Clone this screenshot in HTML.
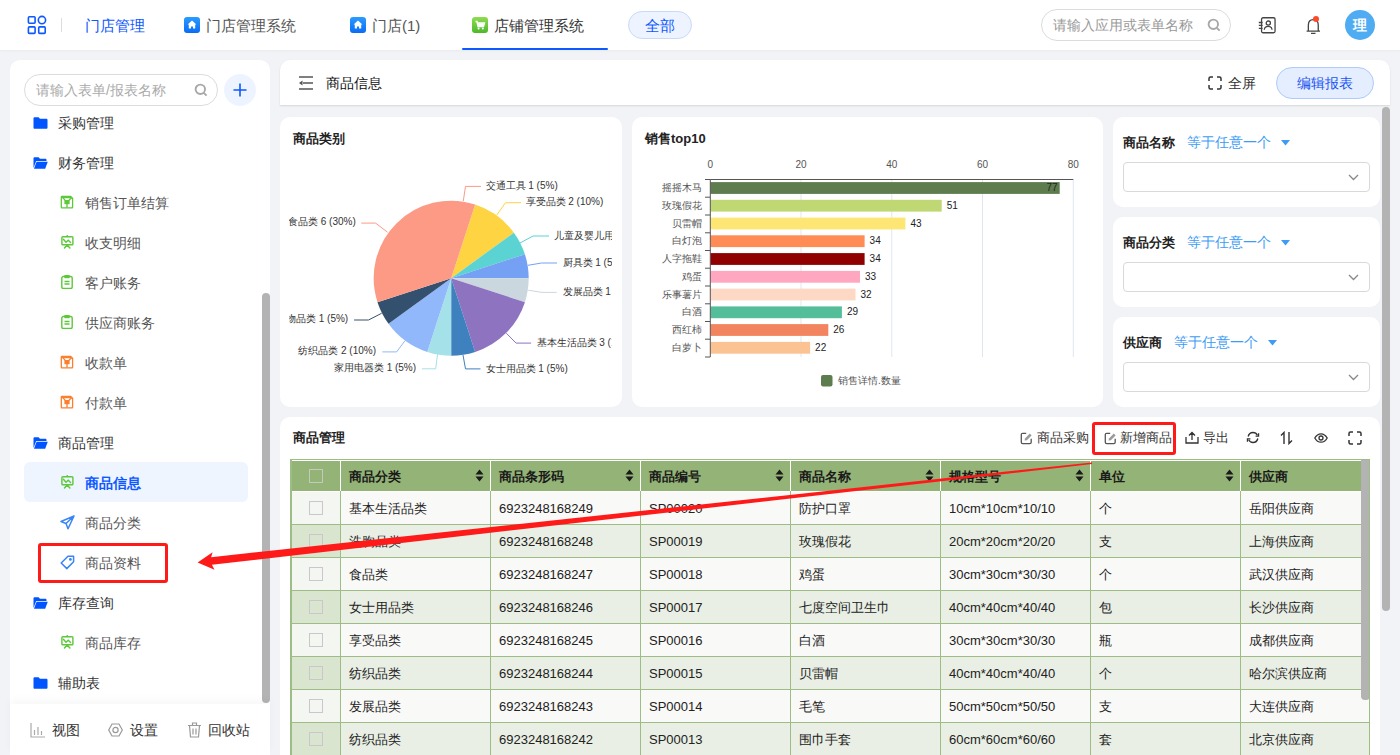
<!DOCTYPE html><html><head><meta charset="utf-8"><style>
*{box-sizing:border-box;margin:0;padding:0}
html,body{width:1400px;height:755px;overflow:hidden;background:#f2f3f7;font-family:"Liberation Sans", sans-serif;color:#333}
.abs{position:absolute}
.t{position:absolute;white-space:nowrap;line-height:1}
.card{position:absolute;background:#fff;border-radius:10px}
</style></head><body>

<div class="abs" style="left:0;top:0;width:1400px;height:50px;background:#fff;box-shadow:0 1px 3px rgba(0,0,0,0.04)"></div>
<svg class="abs" style="left:27px;top:15px" width="20" height="20" viewBox="0 0 20 20" fill="none" stroke="#0d58ff" stroke-width="1.6">
<rect x="1.4" y="1.8" width="6.7" height="6.5" rx="1"/><circle cx="14.95" cy="5.05" r="3.65"/><rect x="1.4" y="11.9" width="6.7" height="6.5" rx="1"/><rect x="11.7" y="11.9" width="6.5" height="6.5" rx="1"/></svg>
<div class="abs" style="left:61px;top:18px;width:1px;height:14px;background:#dcdcdc"></div>
<div class="t" style="left:85px;top:18px;font-size:15px;color:#0d58ff">门店管理</div>
<svg class="abs" style="left:184px;top:17px" width="16" height="16" viewBox="0 0 16 16"><defs><linearGradient id="hg184" x1="0" y1="0" x2="0" y2="1"><stop offset="0" stop-color="#2b9bff"/><stop offset="1" stop-color="#0a6cf5"/></linearGradient></defs><rect width="16" height="16" rx="3" fill="url(#hg184)"/><path d="M8 3.6 L12.4 7.6 L11.2 7.6 L11.2 11.6 L9 11.6 L9 9.6 L7 9.6 L7 11.6 L4.8 11.6 L4.8 7.6 L3.6 7.6 Z" fill="#fff"/></svg>
<div class="t" style="left:206px;top:18px;font-size:15px;color:#555">门店管理系统</div>
<svg class="abs" style="left:350px;top:17px" width="16" height="16" viewBox="0 0 16 16"><defs><linearGradient id="hg350" x1="0" y1="0" x2="0" y2="1"><stop offset="0" stop-color="#2b9bff"/><stop offset="1" stop-color="#0a6cf5"/></linearGradient></defs><rect width="16" height="16" rx="3" fill="url(#hg350)"/><path d="M8 3.6 L12.4 7.6 L11.2 7.6 L11.2 11.6 L9 11.6 L9 9.6 L7 9.6 L7 11.6 L4.8 11.6 L4.8 7.6 L3.6 7.6 Z" fill="#fff"/></svg>
<div class="t" style="left:372px;top:18px;font-size:15px;color:#555">门店(1)</div>
<svg class="abs" style="left:472px;top:17px" width="16" height="16" viewBox="0 0 16 16"><defs><linearGradient id="gg" x1="0" y1="0" x2="0" y2="1"><stop offset="0" stop-color="#8fdc52"/><stop offset="1" stop-color="#4cb82a"/></linearGradient></defs><rect width="16" height="16" rx="3" fill="url(#gg)"/><path d="M3.5 4.5 L5 4.5 L6 9.5 L11.5 9.5 L12.5 6 L5.5 6" fill="none" stroke="#fff" stroke-width="1.4"/><path d="M5.6 6.2 L12.2 6.2 L11.4 9.2 L6.2 9.2Z" fill="#fff"/><circle cx="6.6" cy="11.6" r="1" fill="#fff"/><circle cx="10.8" cy="11.6" r="1" fill="#fff"/></svg>
<div class="t" style="left:494px;top:18px;font-size:15px;color:#333">店铺管理系统</div>
<div class="abs" style="left:462px;top:48px;width:146px;height:2px;border-radius:1px;background:#0d58ff"></div>
<div class="abs" style="left:628px;top:11px;width:64px;height:28px;border:1px solid #c9daf8;background:#eef4ff;border-radius:14px"></div>
<div class="t" style="left:645px;top:18px;font-size:15px;color:#0d58ff">全部</div>
<div class="abs" style="left:1041px;top:9px;width:190px;height:32px;border:1px solid #dcdcdc;border-radius:16px;background:#fff"></div>
<div class="t" style="left:1053px;top:18px;font-size:14px;color:#999">请输入应用或表单名称</div>
<svg class="abs" style="left:1207px;top:18px" width="14" height="14" viewBox="0 0 14 14" fill="none" stroke="#a8a8a8" stroke-width="1.9"><circle cx="6.3" cy="6.3" r="4.7"/><path d="M9.8 9.8 L12.6 12.6"/></svg>
<svg class="abs" style="left:1258px;top:16px" width="19" height="19" viewBox="0 0 19 19" fill="none" stroke="#444" stroke-width="1.3"><rect x="3.55" y="1.75" width="13.5" height="15" rx="1.5"/><circle cx="10.3" cy="7.1" r="2.1"/><path d="M6.3 13.7 C6.5 11.5 8 10.4 10.2 10.4 C12.4 10.4 13.9 11.5 14.1 13.7"/><path d="M0.8 6.5 H4.6 M0.8 9.4 H4.6 M0.8 12.4 H4.6"/></svg>
<svg class="abs" style="left:1304px;top:15px" width="18" height="20" viewBox="0 0 18 20" fill="none" stroke="#444" stroke-width="1.3"><path d="M4.35 15.6 V10 C4.35 6.5 6.5 4.55 9.3 4.55 C12.1 4.55 14.25 6.5 14.25 10 V15.6 M2.6 16.1 H16 M7 18.4 H11.5"/><circle cx="12" cy="3.9" r="3" fill="#fd4a2c" stroke="none"/></svg>
<div class="abs" style="left:1345px;top:10px;width:30px;height:30px;border-radius:50%;background:#4fabf2"></div>
<div class="t" style="left:1353px;top:18px;font-size:14px;font-weight:bold;color:#fff">理</div>
<div class="abs" style="left:10px;top:60px;width:260px;height:700px;background:#fff;border-radius:10px 10px 0 0"></div>
<div class="abs" style="left:24px;top:74px;width:194px;height:32px;border:1px solid #dcdcdc;border-radius:16px"></div>
<div class="t" style="left:36px;top:83px;font-size:14px;color:#aaa">请输入表单/报表名称</div>
<svg class="abs" style="left:194px;top:83px" width="14" height="14" viewBox="0 0 14 14" fill="none" stroke="#a8a8a8" stroke-width="1.9"><circle cx="6.3" cy="6.3" r="4.7"/><path d="M9.8 9.8 L12.6 12.6"/></svg>
<div class="abs" style="left:224px;top:74px;width:32px;height:32px;border-radius:50%;background:#eef4ff"></div>
<svg class="abs" style="left:232px;top:82px" width="16" height="16" viewBox="0 0 16 16" stroke="#0d58ff" stroke-width="1.6"><path d="M8 1.5 V14.5 M1.5 8 H14.5"/></svg>
<svg class="abs" style="left:33px;top:117px" width="15" height="12" viewBox="0 0 15 12"><path d="M0.5 1.2 C0.5 0.7 0.9 0.3 1.4 0.3 H5.6 L7 1.8 H13.6 C14.1 1.8 14.5 2.2 14.5 2.7 V11 C14.5 11.5 14.1 11.8 13.6 11.8 H1.4 C0.9 11.8 0.5 11.5 0.5 11 Z" fill="#0055ff"/></svg>
<div class="t" style="left:58px;top:116px;font-size:14px;color:#333">采购管理</div>
<svg class="abs" style="left:33px;top:157px" width="15" height="12" viewBox="0 0 15 12"><path d="M0.5 1.2 C0.5 0.7 0.9 0.3 1.4 0.3 H5.6 L7 1.8 H12.6 C13.1 1.8 13.5 2.2 13.5 2.7 V4 H3.2 L0.5 11 Z" fill="#0055ff"/><path d="M3.6 4.8 H14.8 L12.2 11.8 H1 Z" fill="#0055ff"/></svg>
<div class="t" style="left:58px;top:156px;font-size:14px;color:#333">财务管理</div>
<svg class="abs" style="left:60px;top:195px" width="14" height="14" viewBox="0 0 14 14" fill="none" stroke="#5cc83a" stroke-width="1.3"><path d="M1.9 1.3 H10.6 L12.6 3.3 V12.2 Q12.6 12.8 12 12.8 H1.9 Q1.3 12.8 1.3 12.2 V1.9 Q1.3 1.3 1.9 1.3 Z"/><path d="M2 1.6 L5 5.2 M11.8 2.6 L9 5.2 M7 9 V12.8"/><rect x="4.4" y="5" width="5.2" height="4.2" fill="#5cc83a" stroke="none"/><path d="M1.3 1.3 H10.6 L12.6 3.3 H1.3Z" fill="#5cc83a" stroke="none"/></svg>
<div class="t" style="left:85px;top:196px;font-size:14px;color:#555;font-weight:normal">销售订单结算</div>
<svg class="abs" style="left:60px;top:235px" width="14" height="14" viewBox="0 0 14 14" fill="none" stroke="#5cc83a" stroke-width="1.4" stroke-linecap="round"><rect x="1.9" y="1.7" width="11" height="8" rx="0.8"/><path d="M3.4 4.3 L6 7.3 L8.2 5.2 L10.6 7.6 M7.2 10 L4.5 13 M7.2 10 L9.9 13 M7.2 0.6 V1.6"/></svg>
<div class="t" style="left:85px;top:236px;font-size:14px;color:#555;font-weight:normal">收支明细</div>
<svg class="abs" style="left:60px;top:275px" width="14" height="14" viewBox="0 0 14 14" fill="none" stroke="#5cc83a" stroke-width="1.4"><rect x="1.8" y="1.5" width="10.4" height="12" rx="1.5"/><rect x="4.8" y="0.6" width="4.4" height="2" rx="0.8" fill="#5cc83a"/><path d="M4.5 6.5 H9.5 M4.5 9 H9.5"/></svg>
<div class="t" style="left:85px;top:276px;font-size:14px;color:#555;font-weight:normal">客户账务</div>
<svg class="abs" style="left:60px;top:315px" width="14" height="14" viewBox="0 0 14 14" fill="none" stroke="#5cc83a" stroke-width="1.4"><rect x="1.8" y="1.5" width="10.4" height="12" rx="1.5"/><rect x="4.8" y="0.6" width="4.4" height="2" rx="0.8" fill="#5cc83a"/><path d="M4.5 6.5 H9.5 M4.5 9 H9.5"/></svg>
<div class="t" style="left:85px;top:316px;font-size:14px;color:#555;font-weight:normal">供应商账务</div>
<svg class="abs" style="left:60px;top:355px" width="14" height="14" viewBox="0 0 14 14" fill="none" stroke="#fb7f2c" stroke-width="1.3"><path d="M1.9 1.3 H10.6 L12.6 3.3 V12.2 Q12.6 12.8 12 12.8 H1.9 Q1.3 12.8 1.3 12.2 V1.9 Q1.3 1.3 1.9 1.3 Z"/><path d="M2 1.6 L5 5.2 M11.8 2.6 L9 5.2 M7 9 V12.8"/><rect x="4.4" y="5" width="5.2" height="4.2" fill="#fb7f2c" stroke="none"/><path d="M1.3 1.3 H10.6 L12.6 3.3 H1.3Z" fill="#fb7f2c" stroke="none"/></svg>
<div class="t" style="left:85px;top:356px;font-size:14px;color:#555;font-weight:normal">收款单</div>
<svg class="abs" style="left:60px;top:395px" width="14" height="14" viewBox="0 0 14 14" fill="none" stroke="#fb7f2c" stroke-width="1.3"><path d="M1.9 1.3 H10.6 L12.6 3.3 V12.2 Q12.6 12.8 12 12.8 H1.9 Q1.3 12.8 1.3 12.2 V1.9 Q1.3 1.3 1.9 1.3 Z"/><path d="M2 1.6 L5 5.2 M11.8 2.6 L9 5.2 M7 9 V12.8"/><rect x="4.4" y="5" width="5.2" height="4.2" fill="#fb7f2c" stroke="none"/><path d="M1.3 1.3 H10.6 L12.6 3.3 H1.3Z" fill="#fb7f2c" stroke="none"/></svg>
<div class="t" style="left:85px;top:396px;font-size:14px;color:#555;font-weight:normal">付款单</div>
<svg class="abs" style="left:33px;top:437px" width="15" height="12" viewBox="0 0 15 12"><path d="M0.5 1.2 C0.5 0.7 0.9 0.3 1.4 0.3 H5.6 L7 1.8 H12.6 C13.1 1.8 13.5 2.2 13.5 2.7 V4 H3.2 L0.5 11 Z" fill="#0055ff"/><path d="M3.6 4.8 H14.8 L12.2 11.8 H1 Z" fill="#0055ff"/></svg>
<div class="t" style="left:58px;top:436px;font-size:14px;color:#333">商品管理</div>
<div class="abs" style="left:24px;top:462px;width:224px;height:40px;background:#eef5ff;border-radius:6px"></div>
<svg class="abs" style="left:60px;top:475px" width="14" height="14" viewBox="0 0 14 14" fill="none" stroke="#5cc83a" stroke-width="1.4" stroke-linecap="round"><rect x="1.9" y="1.7" width="11" height="8" rx="0.8"/><path d="M3.4 4.3 L6 7.3 L8.2 5.2 L10.6 7.6 M7.2 10 L4.5 13 M7.2 10 L9.9 13 M7.2 0.6 V1.6"/></svg>
<div class="t" style="left:85px;top:476px;font-size:14px;color:#0d58ff;font-weight:bold">商品信息</div>
<svg class="abs" style="left:60px;top:515px" width="15" height="15" viewBox="0 0 15 15" fill="none" stroke="#3a84f5" stroke-width="1.5" stroke-linejoin="round"><path d="M14 1 L1 6.5 L6 8.5 L8 13.8 Z M14 1 L6 8.5"/></svg>
<div class="t" style="left:85px;top:516px;font-size:14px;color:#555;font-weight:normal">商品分类</div>
<svg class="abs" style="left:60px;top:555px" width="15" height="15" viewBox="0 0 15 15" fill="none" stroke="#3a84f5" stroke-width="1.5" stroke-linejoin="round"><path d="M8 1.2 H13.6 V6.8 L6.8 13.6 L1.2 8 Z"/><circle cx="10.4" cy="4.4" r="1.4" fill="#3a84f5" stroke="none"/></svg>
<div class="t" style="left:85px;top:556px;font-size:14px;color:#555;font-weight:normal">商品资料</div>
<svg class="abs" style="left:33px;top:597px" width="15" height="12" viewBox="0 0 15 12"><path d="M0.5 1.2 C0.5 0.7 0.9 0.3 1.4 0.3 H5.6 L7 1.8 H12.6 C13.1 1.8 13.5 2.2 13.5 2.7 V4 H3.2 L0.5 11 Z" fill="#0055ff"/><path d="M3.6 4.8 H14.8 L12.2 11.8 H1 Z" fill="#0055ff"/></svg>
<div class="t" style="left:58px;top:596px;font-size:14px;color:#333">库存查询</div>
<svg class="abs" style="left:60px;top:635px" width="14" height="14" viewBox="0 0 14 14" fill="none" stroke="#5cc83a" stroke-width="1.4" stroke-linecap="round"><rect x="1.9" y="1.7" width="11" height="8" rx="0.8"/><path d="M3.4 4.3 L6 7.3 L8.2 5.2 L10.6 7.6 M7.2 10 L4.5 13 M7.2 10 L9.9 13 M7.2 0.6 V1.6"/></svg>
<div class="t" style="left:85px;top:636px;font-size:14px;color:#555;font-weight:normal">商品库存</div>
<svg class="abs" style="left:33px;top:677px" width="15" height="12" viewBox="0 0 15 12"><path d="M0.5 1.2 C0.5 0.7 0.9 0.3 1.4 0.3 H5.6 L7 1.8 H13.6 C14.1 1.8 14.5 2.2 14.5 2.7 V11 C14.5 11.5 14.1 11.8 13.6 11.8 H1.4 C0.9 11.8 0.5 11.5 0.5 11 Z" fill="#0055ff"/></svg>
<div class="t" style="left:58px;top:676px;font-size:14px;color:#333">辅助表</div>
<div class="abs" style="left:262px;top:293px;width:8px;height:410px;background:#b3b3b3;border-radius:4px"></div>
<div class="abs" style="left:10px;top:704px;width:260px;height:51px;background:#fff;box-shadow:0 -4px 8px rgba(0,0,0,0.03)"></div>
<svg class="abs" style="left:30px;top:723px" width="16" height="15" viewBox="0 0 16 15" fill="none" stroke="#aaa" stroke-width="1.2"><path d="M1 0 V14 H15 M4.5 7 V12 M8 4 V12 M11.5 8 V12"/></svg>
<div class="t" style="left:52px;top:723px;font-size:14px;color:#333">视图</div>
<svg class="abs" style="left:108px;top:723px" width="15" height="14" viewBox="0 0 15 14" fill="none" stroke="#999" stroke-width="1.2"><path d="M4 1 H11 L14.3 7 L11 13 H4 L0.7 7 Z"/><circle cx="7.5" cy="7" r="2.6"/></svg>
<div class="t" style="left:130px;top:723px;font-size:14px;color:#333">设置</div>
<svg class="abs" style="left:187px;top:722px" width="15" height="16" viewBox="0 0 15 16" fill="none" stroke="#999" stroke-width="1.2"><path d="M1 3.5 H14 M5.5 3.5 V1 H9.5 V3.5 M2.5 3.5 L3.5 15 H11.5 L12.5 3.5 M6 6.5 V12.5 M9 6.5 V12.5"/></svg>
<div class="t" style="left:208px;top:723px;font-size:14px;color:#333">回收站</div>
<div class="abs" style="left:280px;top:60px;width:1110px;height:45px;background:#fff;border-radius:10px 10px 0 0;box-shadow:0 1px 2px rgba(0,0,0,0.12)"></div>
<svg class="abs" style="left:299px;top:76px" width="14" height="14" viewBox="0 0 14 14" fill="none" stroke="#555" stroke-width="1.6"><path d="M0 1 H14 M4 7 H14 M0 13 H14"/><path d="M0 7 L3.5 4.5 V9.5 Z" fill="#555" stroke="none"/></svg>
<div class="t" style="left:326px;top:76px;font-size:14px;color:#111">商品信息</div>
<svg class="abs" style="left:1208px;top:76px" width="14" height="14" viewBox="0 0 14 14" fill="none" stroke="#333" stroke-width="1.5"><path d="M1 5 V2.5 Q1 1 2.5 1 H5 M9 1 H11.5 Q13 1 13 2.5 V5 M13 9 V11.5 Q13 13 11.5 13 H9 M5 13 H2.5 Q1 13 1 11.5 V9"/></svg>
<div class="t" style="left:1228px;top:76px;font-size:14px;color:#333">全屏</div>
<div class="abs" style="left:1276px;top:67px;width:98px;height:32px;border:1px solid #aecbfa;background:#e4eeff;border-radius:16px"></div>
<div class="t" style="left:1297px;top:76px;font-size:14px;color:#1a53f0">编辑报表</div>
<div class="abs" style="left:1382px;top:107px;width:8px;height:504px;background:#b3b3b3;border-radius:4px"></div>
<div class="card" style="left:280px;top:117px;width:342px;height:290px"></div>
<div class="t" style="left:293px;top:132px;font-size:13px;font-weight:bold;color:#222">商品类别</div>
<svg class="abs" style="left:289px;top:117px" width="323" height="290" viewBox="289 117 323 290" font-family='"Liberation Sans", sans-serif' font-size="10"><path d="M451.2,278.2 L475.15,204.49 A77.5,77.5 0 0 1 513.90,232.65 Z" fill="#fed443"/><path d="M451.2,278.2 L513.90,232.65 A77.5,77.5 0 0 1 524.91,254.25 Z" fill="#5bd3d3"/><path d="M451.2,278.2 L524.91,254.25 A77.5,77.5 0 0 1 528.70,278.20 Z" fill="#75a1f4"/><path d="M451.2,278.2 L528.70,278.20 A77.5,77.5 0 0 1 524.91,302.15 Z" fill="#cbd7df"/><path d="M451.2,278.2 L524.91,302.15 A77.5,77.5 0 0 1 475.15,351.91 Z" fill="#8d73c0"/><path d="M451.2,278.2 L475.15,351.91 A77.5,77.5 0 0 1 451.20,355.70 Z" fill="#3f80bf"/><path d="M451.2,278.2 L451.20,355.70 A77.5,77.5 0 0 1 427.25,351.91 Z" fill="#a5e1e8"/><path d="M451.2,278.2 L427.25,351.91 A77.5,77.5 0 0 1 388.50,323.75 Z" fill="#90b8fb"/><path d="M451.2,278.2 L388.50,323.75 A77.5,77.5 0 0 1 377.49,302.15 Z" fill="#34506f"/><path d="M451.2,278.2 L377.49,302.15 A77.5,77.5 0 0 1 475.15,204.49 Z" fill="#fd9a86"/><path d="M463.3,201 L465.5,186.4 L481,186.4" fill="none" stroke="#fd9a86" stroke-width="1"/><text x="485.5" y="188.8" text-anchor="start" fill="#333">交通工具 1 (5%)</text><path d="M496.8,215 L505.5,202.7 L521,202.7" fill="none" stroke="#fed443" stroke-width="1"/><text x="525.5" y="205.3" text-anchor="start" fill="#333">享受品类 2 (10%)</text><path d="M519.6,243.2 L533,236 L549,236" fill="none" stroke="#5bd3d3" stroke-width="1"/><text x="553.5" y="238.8" text-anchor="start" fill="#333">儿童及婴儿用品 1 (5%)</text><path d="M528,265.3 L541.6,263 L557,263" fill="none" stroke="#75a1f4" stroke-width="1"/><text x="562.5" y="265.8" text-anchor="start" fill="#333">厨具类 1 (5%)</text><path d="M528.2,290.2 L542,292.4 L556.6,292.4" fill="none" stroke="#cbd7df" stroke-width="1"/><text x="562.5" y="294.8" text-anchor="start" fill="#333">发展品类 1 (5%)</text><path d="M506.3,333.2 L516.1,343.1 L531.1,343.1" fill="none" stroke="#8d73c0" stroke-width="1"/><text x="536.5" y="345.8" text-anchor="start" fill="#333">基本生活品类 3 (15%)</text><path d="M463,355 L465.5,368.9 L480.5,368.9" fill="none" stroke="#3f80bf" stroke-width="1"/><text x="485.5" y="371.8" text-anchor="start" fill="#333">女士用品类 1 (5%)</text><path d="M437.6,353.8 L435.7,368.8 L422,368.8" fill="none" stroke="#a5e1e8" stroke-width="1"/><text x="416.1" y="371.3" text-anchor="end" fill="#333">家用电器类 1 (5%)</text><path d="M405,340.7 L396.6,351.9 L382.3,351.9" fill="none" stroke="#90b8fb" stroke-width="1"/><text x="376" y="354.1" text-anchor="end" fill="#333">纺织品类 2 (10%)</text><path d="M381.6,313.3 L368.5,320 L354.1,320" fill="none" stroke="#34506f" stroke-width="1"/><text x="348.2" y="322.1" text-anchor="end" fill="#333">宠物品类 1 (5%)</text><path d="M387.5,232.2 L375.6,223.1 L361.3,223.1" fill="none" stroke="#fd9a86" stroke-width="1"/><text x="355.8" y="225.4" text-anchor="end" fill="#333">食品类 6 (30%)</text></svg>
<div class="card" style="left:632px;top:117px;width:471px;height:290px"></div>
<div class="t" style="left:645px;top:132px;font-size:13px;font-weight:bold;color:#222">销售top10</div>
<svg class="abs" style="left:632px;top:117px" width="471" height="290" viewBox="632 117 471 290" font-family='"Liberation Sans", sans-serif' font-size="10"><line x1="801.0" y1="179.5" x2="801.0" y2="357" stroke="#e0e6f1" stroke-width="1"/><line x1="891.8" y1="179.5" x2="891.8" y2="357" stroke="#e0e6f1" stroke-width="1"/><line x1="982.5" y1="179.5" x2="982.5" y2="357" stroke="#e0e6f1" stroke-width="1"/><line x1="1073.3" y1="179.5" x2="1073.3" y2="357" stroke="#e0e6f1" stroke-width="1"/><text x="710.3" y="168" text-anchor="middle" fill="#555">0</text><text x="801.0" y="168" text-anchor="middle" fill="#555">20</text><text x="891.8" y="168" text-anchor="middle" fill="#555">40</text><text x="982.5" y="168" text-anchor="middle" fill="#555">60</text><text x="1073.3" y="168" text-anchor="middle" fill="#555">80</text><rect x="710.3" y="182.1" width="349.4" height="11.8" fill="#5e7d4f"/><text x="1057.7" y="191.2" text-anchor="end" fill="#222">77</text><text x="701.5" y="191.2" text-anchor="end" fill="#555">摇摇木马</text><rect x="710.3" y="199.8" width="231.4" height="11.8" fill="#c0d874"/><text x="946.7" y="208.9" fill="#222">51</text><text x="701.5" y="208.9" text-anchor="end" fill="#555">玫瑰假花</text><rect x="710.3" y="217.6" width="195.1" height="11.8" fill="#fde674"/><text x="910.4" y="226.7" fill="#222">43</text><text x="701.5" y="226.7" text-anchor="end" fill="#555">贝雷帽</text><rect x="710.3" y="235.3" width="154.3" height="11.8" fill="#ff8b55"/><text x="869.6" y="244.4" fill="#222">34</text><text x="701.5" y="244.4" text-anchor="end" fill="#555">白灯泡</text><rect x="710.3" y="253.1" width="154.3" height="11.8" fill="#900000"/><text x="869.6" y="262.2" fill="#222">34</text><text x="701.5" y="262.2" text-anchor="end" fill="#555">人字拖鞋</text><rect x="710.3" y="270.9" width="149.7" height="11.8" fill="#ffa7c1"/><text x="865.0" y="279.9" fill="#222">33</text><text x="701.5" y="279.9" text-anchor="end" fill="#555">鸡蛋</text><rect x="710.3" y="288.6" width="145.2" height="11.8" fill="#fdd8c5"/><text x="860.5" y="297.7" fill="#222">32</text><text x="701.5" y="297.7" text-anchor="end" fill="#555">乐事薯片</text><rect x="710.3" y="306.4" width="131.6" height="11.8" fill="#54be9b"/><text x="846.9" y="315.4" fill="#222">29</text><text x="701.5" y="315.4" text-anchor="end" fill="#555">白酒</text><rect x="710.3" y="324.1" width="118.0" height="11.8" fill="#f2855f"/><text x="833.3" y="333.2" fill="#222">26</text><text x="701.5" y="333.2" text-anchor="end" fill="#555">西红柿</text><rect x="710.3" y="341.9" width="99.8" height="11.8" fill="#fbc392"/><text x="815.1" y="350.9" fill="#222">22</text><text x="701.5" y="350.9" text-anchor="end" fill="#555">白萝卜</text><line x1="705" y1="179.5" x2="710.3" y2="179.5" stroke="#555" stroke-width="1"/><line x1="705" y1="197.2" x2="710.3" y2="197.2" stroke="#555" stroke-width="1"/><line x1="705" y1="215.0" x2="710.3" y2="215.0" stroke="#555" stroke-width="1"/><line x1="705" y1="232.8" x2="710.3" y2="232.8" stroke="#555" stroke-width="1"/><line x1="705" y1="250.5" x2="710.3" y2="250.5" stroke="#555" stroke-width="1"/><line x1="705" y1="268.2" x2="710.3" y2="268.2" stroke="#555" stroke-width="1"/><line x1="705" y1="286.0" x2="710.3" y2="286.0" stroke="#555" stroke-width="1"/><line x1="705" y1="303.8" x2="710.3" y2="303.8" stroke="#555" stroke-width="1"/><line x1="705" y1="321.5" x2="710.3" y2="321.5" stroke="#555" stroke-width="1"/><line x1="705" y1="339.2" x2="710.3" y2="339.2" stroke="#555" stroke-width="1"/><line x1="705" y1="357.0" x2="710.3" y2="357.0" stroke="#555" stroke-width="1"/><line x1="710.3" y1="179.5" x2="1073.3" y2="179.5" stroke="#555" stroke-width="1"/><line x1="710.3" y1="179.5" x2="710.3" y2="357" stroke="#555" stroke-width="1"/><rect x="821" y="375" width="11.5" height="11.5" rx="2" fill="#5e7d4f"/><text x="838" y="384" fill="#555">销售详情.数量</text></svg>
<div class="card" style="left:1113px;top:117px;width:267px;height:90px"></div>
<div class="t" style="left:1123px;top:136px;font-size:13px;font-weight:bold;color:#222">商品名称</div>
<div class="t" style="left:1187px;top:135px;font-size:14px;color:#3e9cf5">等于任意一个</div>
<svg class="abs" style="left:1281px;top:140px" width="9" height="6" viewBox="0 0 9 6"><path d="M0 0 H9 L4.5 5.5Z" fill="#3e9cf5"/></svg>
<div class="abs" style="left:1123px;top:162px;width:247px;height:30px;border:1px solid #d9d9d9;border-radius:4px;background:#fff"></div>
<svg class="abs" style="left:1348px;top:174px" width="11" height="7" viewBox="0 0 11 7" fill="none" stroke="#888" stroke-width="1.3"><path d="M1 1 L5.5 5.5 L10 1"/></svg>
<div class="card" style="left:1113px;top:217px;width:267px;height:90px"></div>
<div class="t" style="left:1123px;top:236px;font-size:13px;font-weight:bold;color:#222">商品分类</div>
<div class="t" style="left:1187px;top:235px;font-size:14px;color:#3e9cf5">等于任意一个</div>
<svg class="abs" style="left:1281px;top:240px" width="9" height="6" viewBox="0 0 9 6"><path d="M0 0 H9 L4.5 5.5Z" fill="#3e9cf5"/></svg>
<div class="abs" style="left:1123px;top:262px;width:247px;height:30px;border:1px solid #d9d9d9;border-radius:4px;background:#fff"></div>
<svg class="abs" style="left:1348px;top:274px" width="11" height="7" viewBox="0 0 11 7" fill="none" stroke="#888" stroke-width="1.3"><path d="M1 1 L5.5 5.5 L10 1"/></svg>
<div class="card" style="left:1113px;top:317px;width:267px;height:90px"></div>
<div class="t" style="left:1123px;top:336px;font-size:13px;font-weight:bold;color:#222">供应商</div>
<div class="t" style="left:1174px;top:335px;font-size:14px;color:#3e9cf5">等于任意一个</div>
<svg class="abs" style="left:1268px;top:340px" width="9" height="6" viewBox="0 0 9 6"><path d="M0 0 H9 L4.5 5.5Z" fill="#3e9cf5"/></svg>
<div class="abs" style="left:1123px;top:362px;width:247px;height:30px;border:1px solid #d9d9d9;border-radius:4px;background:#fff"></div>
<svg class="abs" style="left:1348px;top:374px" width="11" height="7" viewBox="0 0 11 7" fill="none" stroke="#888" stroke-width="1.3"><path d="M1 1 L5.5 5.5 L10 1"/></svg>
<div class="card" style="left:280px;top:417px;width:1100px;height:360px"></div>
<div class="t" style="left:293px;top:431px;font-size:13px;font-weight:bold;color:#222">商品管理</div>
<svg class="abs" style="left:1020px;top:432px" width="13" height="13" viewBox="0 0 13 13" fill="none"><path d="M6.2 1.3 H2.7 Q1.3 1.3 1.3 2.7 V10.3 Q1.3 11.7 2.7 11.7 H9.8 Q11.2 11.7 11.2 10.3 V6.8" stroke="#555" stroke-width="1.3"/><path d="M4.6 8.6 L5 6.4 L9.8 1.6 L11.6 3.4 L6.8 8.2 Z" fill="#9a9a9a"/></svg>
<div class="t" style="left:1037px;top:431px;font-size:13px;color:#333">商品采购</div>
<svg class="abs" style="left:1104px;top:432px" width="13" height="13" viewBox="0 0 13 13" fill="none"><path d="M6.2 1.3 H2.7 Q1.3 1.3 1.3 2.7 V10.3 Q1.3 11.7 2.7 11.7 H9.8 Q11.2 11.7 11.2 10.3 V6.8" stroke="#555" stroke-width="1.3"/><path d="M4.6 8.6 L5 6.4 L9.8 1.6 L11.6 3.4 L6.8 8.2 Z" fill="#9a9a9a"/></svg>
<div class="t" style="left:1120px;top:431px;font-size:13px;color:#333">新增商品</div>
<svg class="abs" style="left:1185px;top:431px" width="14" height="13" viewBox="0 0 14 13" fill="none" stroke="#333" stroke-width="1.3"><path d="M1 6 V12 H13 V6 M7 9 V1.5 M4 4.5 L7 1.5 L10 4.5"/></svg>
<div class="t" style="left:1203px;top:431px;font-size:13px;color:#333">导出</div>
<svg class="abs" style="left:1246px;top:431px" width="14" height="13" viewBox="0 0 14 13" fill="none" stroke="#333" stroke-width="1.4"><path d="M2.2 5.5 C2.8 3 4.8 1.5 7 1.5 C9 1.5 10.6 2.6 11.4 4.2 M11.8 7.5 C11.2 10 9.2 11.5 7 11.5 C5 11.5 3.4 10.4 2.6 8.8"/><path d="M12.6 2.2 V5.2 H9.6 M1.4 10.8 V7.8 H4.4" stroke-width="1.2"/></svg>
<svg class="abs" style="left:1280px;top:431px" width="13" height="14" viewBox="0 0 13 14" fill="none" stroke="#333" stroke-width="1.4"><path d="M4 13 V1.5 L1 4.5 M9 1 V12.5 L12 9.5"/></svg>
<svg class="abs" style="left:1314px;top:433px" width="14" height="10" viewBox="0 0 14 10" fill="none" stroke="#333" stroke-width="1.3"><path d="M0.8 5 C2.5 2 4.6 0.8 7 0.8 C9.4 0.8 11.5 2 13.2 5 C11.5 8 9.4 9.2 7 9.2 C4.6 9.2 2.5 8 0.8 5Z"/><circle cx="7" cy="5" r="2"/></svg>
<svg class="abs" style="left:1348px;top:431px" width="14" height="14" viewBox="0 0 14 14" fill="none" stroke="#333" stroke-width="1.5"><path d="M1 5 V2.5 Q1 1 2.5 1 H5 M9 1 H11.5 Q13 1 13 2.5 V5 M13 9 V11.5 Q13 13 11.5 13 H9 M5 13 H2.5 Q1 13 1 11.5 V9"/></svg>
<div class="abs" style="left:290px;top:459px;width:1080px;height:300px;border:1px solid #9dbd85;border-left-width:2px;background:#fff;overflow:hidden">
<div class="abs" style="left:0;top:1px;width:1080px;height:30px;background:#94b377"></div>
<div class="abs" style="left:48px;top:1px;width:1px;height:30px;background:#fff"></div>
<div class="abs" style="left:198px;top:1px;width:1px;height:30px;background:#fff"></div>
<div class="abs" style="left:348px;top:1px;width:1px;height:30px;background:#fff"></div>
<div class="abs" style="left:498px;top:1px;width:1px;height:30px;background:#fff"></div>
<div class="abs" style="left:648px;top:1px;width:1px;height:30px;background:#fff"></div>
<div class="abs" style="left:798px;top:1px;width:1px;height:30px;background:#fff"></div>
<div class="abs" style="left:948px;top:1px;width:1px;height:30px;background:#fff"></div>
<div class="abs" style="left:17px;top:9px;width:14px;height:14px;border:1px solid #c4c9bf;background:#94b377"></div>
<div class="t" style="left:57px;top:10px;font-size:13px;font-weight:bold;color:#1a1a1a">商品分类</div>
<svg class="abs" style="left:183px;top:9px" width="9" height="13" viewBox="0 0 9 13"><path d="M0.5 5.5 L4.5 0.5 L8.5 5.5Z M0.5 7.5 H8.5 L4.5 12.5Z" fill="#1a1a1a"/></svg>
<div class="t" style="left:207px;top:10px;font-size:13px;font-weight:bold;color:#1a1a1a">商品条形码</div>
<svg class="abs" style="left:333px;top:9px" width="9" height="13" viewBox="0 0 9 13"><path d="M0.5 5.5 L4.5 0.5 L8.5 5.5Z M0.5 7.5 H8.5 L4.5 12.5Z" fill="#1a1a1a"/></svg>
<div class="t" style="left:357px;top:10px;font-size:13px;font-weight:bold;color:#1a1a1a">商品编号</div>
<svg class="abs" style="left:483px;top:9px" width="9" height="13" viewBox="0 0 9 13"><path d="M0.5 5.5 L4.5 0.5 L8.5 5.5Z M0.5 7.5 H8.5 L4.5 12.5Z" fill="#1a1a1a"/></svg>
<div class="t" style="left:507px;top:10px;font-size:13px;font-weight:bold;color:#1a1a1a">商品名称</div>
<svg class="abs" style="left:633px;top:9px" width="9" height="13" viewBox="0 0 9 13"><path d="M0.5 5.5 L4.5 0.5 L8.5 5.5Z M0.5 7.5 H8.5 L4.5 12.5Z" fill="#1a1a1a"/></svg>
<div class="t" style="left:657px;top:10px;font-size:13px;font-weight:bold;color:#1a1a1a">规格型号</div>
<svg class="abs" style="left:783px;top:9px" width="9" height="13" viewBox="0 0 9 13"><path d="M0.5 5.5 L4.5 0.5 L8.5 5.5Z M0.5 7.5 H8.5 L4.5 12.5Z" fill="#1a1a1a"/></svg>
<div class="t" style="left:807px;top:10px;font-size:13px;font-weight:bold;color:#1a1a1a">单位</div>
<svg class="abs" style="left:933px;top:9px" width="9" height="13" viewBox="0 0 9 13"><path d="M0.5 5.5 L4.5 0.5 L8.5 5.5Z M0.5 7.5 H8.5 L4.5 12.5Z" fill="#1a1a1a"/></svg>
<div class="t" style="left:957px;top:10px;font-size:13px;font-weight:bold;color:#1a1a1a">供应商</div>
<div class="abs" style="left:0;top:32px;width:1080px;height:33px;background:#f9f9f7;border-bottom:1px solid #9dbd85"></div>
<div class="abs" style="left:0;top:32px;width:48px;height:33px;background:#f4f6f1;border-bottom:1px solid #9dbd85"></div>
<div class="abs" style="left:17px;top:41px;width:14px;height:14px;border:1px solid #cbc6cd"></div>
<div class="t" style="left:57px;top:42px;font-size:13px;color:#222">基本生活品类</div>
<div class="t" style="left:207px;top:42px;font-size:13px;color:#222">6923248168249</div>
<div class="t" style="left:357px;top:42px;font-size:13px;color:#222">SP00020</div>
<div class="t" style="left:507px;top:42px;font-size:13px;color:#222">防护口罩</div>
<div class="t" style="left:657px;top:42px;font-size:13px;color:#222">10cm*10cm*10/10</div>
<div class="t" style="left:807px;top:42px;font-size:13px;color:#222">个</div>
<div class="t" style="left:957px;top:42px;font-size:13px;color:#222">岳阳供应商</div>
<div class="abs" style="left:0;top:65px;width:1080px;height:33px;background:#e9efe4;border-bottom:1px solid #9dbd85"></div>
<div class="abs" style="left:0;top:65px;width:48px;height:33px;background:#dae5d0;border-bottom:1px solid #9dbd85"></div>
<div class="abs" style="left:17px;top:74px;width:14px;height:14px;border:1px solid #cbc6cd"></div>
<div class="t" style="left:57px;top:75px;font-size:13px;color:#222">洗胸品类</div>
<div class="t" style="left:207px;top:75px;font-size:13px;color:#222">6923248168248</div>
<div class="t" style="left:357px;top:75px;font-size:13px;color:#222">SP00019</div>
<div class="t" style="left:507px;top:75px;font-size:13px;color:#222">玫瑰假花</div>
<div class="t" style="left:657px;top:75px;font-size:13px;color:#222">20cm*20cm*20/20</div>
<div class="t" style="left:807px;top:75px;font-size:13px;color:#222">支</div>
<div class="t" style="left:957px;top:75px;font-size:13px;color:#222">上海供应商</div>
<div class="abs" style="left:0;top:98px;width:1080px;height:33px;background:#f9f9f7;border-bottom:1px solid #9dbd85"></div>
<div class="abs" style="left:0;top:98px;width:48px;height:33px;background:#f4f6f1;border-bottom:1px solid #9dbd85"></div>
<div class="abs" style="left:17px;top:107px;width:14px;height:14px;border:1px solid #cbc6cd"></div>
<div class="t" style="left:57px;top:108px;font-size:13px;color:#222">食品类</div>
<div class="t" style="left:207px;top:108px;font-size:13px;color:#222">6923248168247</div>
<div class="t" style="left:357px;top:108px;font-size:13px;color:#222">SP00018</div>
<div class="t" style="left:507px;top:108px;font-size:13px;color:#222">鸡蛋</div>
<div class="t" style="left:657px;top:108px;font-size:13px;color:#222">30cm*30cm*30/30</div>
<div class="t" style="left:807px;top:108px;font-size:13px;color:#222">个</div>
<div class="t" style="left:957px;top:108px;font-size:13px;color:#222">武汉供应商</div>
<div class="abs" style="left:0;top:131px;width:1080px;height:33px;background:#e9efe4;border-bottom:1px solid #9dbd85"></div>
<div class="abs" style="left:0;top:131px;width:48px;height:33px;background:#dae5d0;border-bottom:1px solid #9dbd85"></div>
<div class="abs" style="left:17px;top:140px;width:14px;height:14px;border:1px solid #cbc6cd"></div>
<div class="t" style="left:57px;top:141px;font-size:13px;color:#222">女士用品类</div>
<div class="t" style="left:207px;top:141px;font-size:13px;color:#222">6923248168246</div>
<div class="t" style="left:357px;top:141px;font-size:13px;color:#222">SP00017</div>
<div class="t" style="left:507px;top:141px;font-size:13px;color:#222">七度空间卫生巾</div>
<div class="t" style="left:657px;top:141px;font-size:13px;color:#222">40cm*40cm*40/40</div>
<div class="t" style="left:807px;top:141px;font-size:13px;color:#222">包</div>
<div class="t" style="left:957px;top:141px;font-size:13px;color:#222">长沙供应商</div>
<div class="abs" style="left:0;top:164px;width:1080px;height:33px;background:#f9f9f7;border-bottom:1px solid #9dbd85"></div>
<div class="abs" style="left:0;top:164px;width:48px;height:33px;background:#f4f6f1;border-bottom:1px solid #9dbd85"></div>
<div class="abs" style="left:17px;top:173px;width:14px;height:14px;border:1px solid #cbc6cd"></div>
<div class="t" style="left:57px;top:174px;font-size:13px;color:#222">享受品类</div>
<div class="t" style="left:207px;top:174px;font-size:13px;color:#222">6923248168245</div>
<div class="t" style="left:357px;top:174px;font-size:13px;color:#222">SP00016</div>
<div class="t" style="left:507px;top:174px;font-size:13px;color:#222">白酒</div>
<div class="t" style="left:657px;top:174px;font-size:13px;color:#222">30cm*30cm*30/30</div>
<div class="t" style="left:807px;top:174px;font-size:13px;color:#222">瓶</div>
<div class="t" style="left:957px;top:174px;font-size:13px;color:#222">成都供应商</div>
<div class="abs" style="left:0;top:197px;width:1080px;height:33px;background:#e9efe4;border-bottom:1px solid #9dbd85"></div>
<div class="abs" style="left:0;top:197px;width:48px;height:33px;background:#dae5d0;border-bottom:1px solid #9dbd85"></div>
<div class="abs" style="left:17px;top:206px;width:14px;height:14px;border:1px solid #cbc6cd"></div>
<div class="t" style="left:57px;top:207px;font-size:13px;color:#222">纺织品类</div>
<div class="t" style="left:207px;top:207px;font-size:13px;color:#222">6923248168244</div>
<div class="t" style="left:357px;top:207px;font-size:13px;color:#222">SP00015</div>
<div class="t" style="left:507px;top:207px;font-size:13px;color:#222">贝雷帽</div>
<div class="t" style="left:657px;top:207px;font-size:13px;color:#222">40cm*40cm*40/40</div>
<div class="t" style="left:807px;top:207px;font-size:13px;color:#222">个</div>
<div class="t" style="left:957px;top:207px;font-size:13px;color:#222">哈尔滨供应商</div>
<div class="abs" style="left:0;top:230px;width:1080px;height:33px;background:#f9f9f7;border-bottom:1px solid #9dbd85"></div>
<div class="abs" style="left:0;top:230px;width:48px;height:33px;background:#f4f6f1;border-bottom:1px solid #9dbd85"></div>
<div class="abs" style="left:17px;top:239px;width:14px;height:14px;border:1px solid #cbc6cd"></div>
<div class="t" style="left:57px;top:240px;font-size:13px;color:#222">发展品类</div>
<div class="t" style="left:207px;top:240px;font-size:13px;color:#222">6923248168243</div>
<div class="t" style="left:357px;top:240px;font-size:13px;color:#222">SP00014</div>
<div class="t" style="left:507px;top:240px;font-size:13px;color:#222">毛笔</div>
<div class="t" style="left:657px;top:240px;font-size:13px;color:#222">50cm*50cm*50/50</div>
<div class="t" style="left:807px;top:240px;font-size:13px;color:#222">支</div>
<div class="t" style="left:957px;top:240px;font-size:13px;color:#222">大连供应商</div>
<div class="abs" style="left:0;top:263px;width:1080px;height:33px;background:#e9efe4;border-bottom:1px solid #9dbd85"></div>
<div class="abs" style="left:0;top:263px;width:48px;height:33px;background:#dae5d0;border-bottom:1px solid #9dbd85"></div>
<div class="abs" style="left:17px;top:272px;width:14px;height:14px;border:1px solid #cbc6cd"></div>
<div class="t" style="left:57px;top:273px;font-size:13px;color:#222">纺织品类</div>
<div class="t" style="left:207px;top:273px;font-size:13px;color:#222">6923248168242</div>
<div class="t" style="left:357px;top:273px;font-size:13px;color:#222">SP00013</div>
<div class="t" style="left:507px;top:273px;font-size:13px;color:#222">围巾手套</div>
<div class="t" style="left:657px;top:273px;font-size:13px;color:#222">60cm*60cm*60/60</div>
<div class="t" style="left:807px;top:273px;font-size:13px;color:#222">套</div>
<div class="t" style="left:957px;top:273px;font-size:13px;color:#222">北京供应商</div>
<div class="abs" style="left:48px;top:31px;width:1px;height:300px;background:#9dbd85"></div>
<div class="abs" style="left:198px;top:31px;width:1px;height:300px;background:#9dbd85"></div>
<div class="abs" style="left:348px;top:31px;width:1px;height:300px;background:#9dbd85"></div>
<div class="abs" style="left:498px;top:31px;width:1px;height:300px;background:#9dbd85"></div>
<div class="abs" style="left:648px;top:31px;width:1px;height:300px;background:#9dbd85"></div>
<div class="abs" style="left:798px;top:31px;width:1px;height:300px;background:#9dbd85"></div>
<div class="abs" style="left:948px;top:31px;width:1px;height:300px;background:#9dbd85"></div>
<div class="abs" style="left:1069px;top:0;width:9px;height:240px;background:#b3b3b3;border-radius:0 0 4px 4px"></div>
</div>
<div class="abs" style="left:1092px;top:422px;width:84px;height:33px;border:3px solid #ff1a1a;border-radius:3px"></div>
<div class="abs" style="left:38px;top:543px;width:130px;height:40px;border:3px solid #ff1a1a;border-radius:3px"></div>
<svg class="abs" style="left:0;top:0" width="1400" height="755"><path d="M1092.1,464.0 L211.9,564.7 L214.5,569.7 L197.6,562.5 L212.6,552.3 L211.1,557.2 L1091.9,462.4Z" fill="#ff1a1a"/></svg>
</body></html>
